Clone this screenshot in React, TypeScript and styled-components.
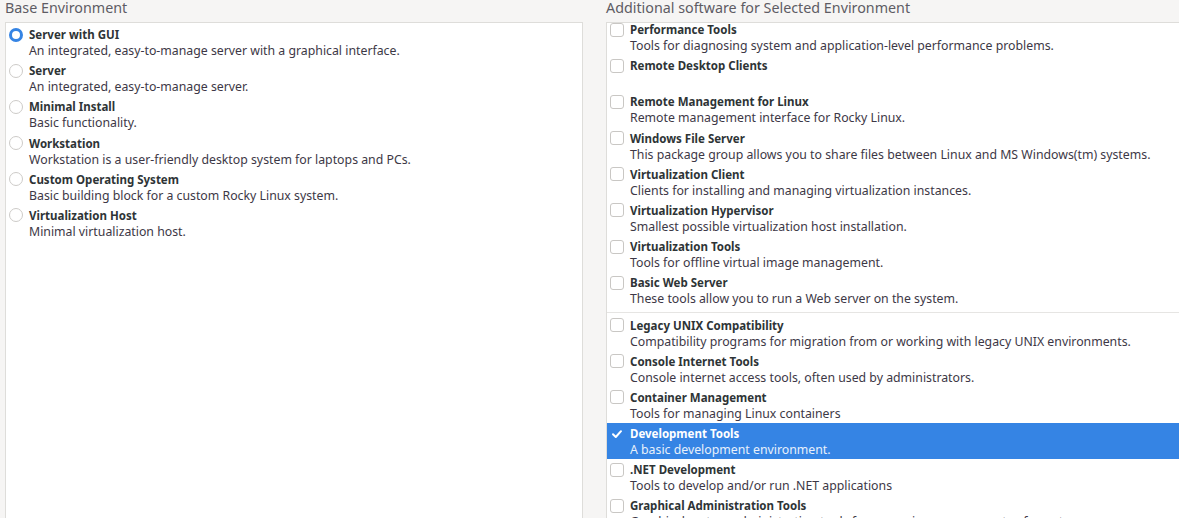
import React from "react";
import styled, { createGlobalStyle } from "styled-components";

const Global = createGlobalStyle`
  html, body { margin: 0; padding: 0; }
  body {
    background: #f6f5f4;
    font-family: "Noto Sans", "DejaVu Sans", sans-serif;
    width: 1179px;
    height: 518px;
    overflow: hidden;
  }
`;

const Page = styled.div`
  display: grid;
  grid-template-columns: 578px 574px;
  column-gap: 23px;
  padding-left: 5px;
  height: 518px;
`;

const Column = styled.div`
  display: flex;
  flex-direction: column;
  min-height: 0;
`;

const Heading = styled.div`
  height: 22px;
  line-height: 16px;
  font-size: 14.3px;
  color: #5e5c64;
  white-space: nowrap;
`;

const Panel = styled.div`
  flex: 1;
  background: #ffffff;
  border: 1px solid #deddda;
  border-bottom: none;
  overflow: hidden;
  min-height: 0;
`;

const List = styled.div<{ $offset: number }>`
  display: flex;
  flex-direction: column;
  margin-top: ${(p) => p.$offset}px;
`;

const Row = styled.div<{ $selected?: boolean }>`
  display: grid;
  grid-template-columns: 20px 1fr;
  height: 36.2px;
  box-sizing: border-box;
  padding: 2px 0 0 3px;
  background: ${(p) => (p.$selected ? "#3584e4" : "transparent")};
  color: ${(p) => (p.$selected ? "#ffffff" : "#2e3436")};
`;

const Control = styled.div`
  height: 17px;
  display: flex;
  align-items: center;
`;

const Texts = styled.div`
  display: flex;
  flex-direction: column;
  white-space: nowrap;
`;

const Title = styled.div`
  font-size: 11.5px;
  font-weight: 700;
  line-height: 17px;
`;

const Desc = styled.div<{ $selected?: boolean }>`
  font-size: 12.3px;
  line-height: 16px;
  color: ${(p) => (p.$selected ? "#e8f0fb" : "#3d3846")};
`;

const Separator = styled.div`
  height: 1px;
  background: #e6e5e3;
  margin: 3px 0 2px;
`;

const RadioCircle = styled.span<{ $on?: boolean }>`
  width: 14px;
  height: 14px;
  box-sizing: border-box;
  border-radius: 50%;
  background: #ffffff;
  border: ${(p) => (p.$on ? "3.5px solid #3584e4" : "1px solid #cdcbc8")};
`;

const CheckBox = styled.span<{ $on?: boolean }>`
  width: 14px;
  height: 14px;
  box-sizing: border-box;
  border-radius: 3px;
  display: flex;
  align-items: center;
  justify-content: center;
  background: ${(p) => (p.$on ? "transparent" : "#ffffff")};
  border: 1px solid ${(p) => (p.$on ? "transparent" : "#c9c7c4")};
`;

type Item = { title: string; desc: string; on?: boolean; sep?: boolean };

const envs: Item[] = [
  { title: "Server with GUI", desc: "An integrated, easy-to-manage server with a graphical interface.", on: true },
  { title: "Server", desc: "An integrated, easy-to-manage server." },
  { title: "Minimal Install", desc: "Basic functionality." },
  { title: "Workstation", desc: "Workstation is a user-friendly desktop system for laptops and PCs." },
  { title: "Custom Operating System", desc: "Basic building block for a custom Rocky Linux system." },
  { title: "Virtualization Host", desc: "Minimal virtualization host." },
];

const addons: Item[] = [
  { title: "Performance Tools", desc: "Tools for diagnosing system and application-level performance problems." },
  { title: "Remote Desktop Clients", desc: "" },
  { title: "Remote Management for Linux", desc: "Remote management interface for Rocky Linux." },
  { title: "Windows File Server", desc: "This package group allows you to share files between Linux and MS Windows(tm) systems." },
  { title: "Virtualization Client", desc: "Clients for installing and managing virtualization instances." },
  { title: "Virtualization Hypervisor", desc: "Smallest possible virtualization host installation." },
  { title: "Virtualization Tools", desc: "Tools for offline virtual image management." },
  { title: "Basic Web Server", desc: "These tools allow you to run a Web server on the system.", sep: true },
  { title: "Legacy UNIX Compatibility", desc: "Compatibility programs for migration from or working with legacy UNIX environments." },
  { title: "Console Internet Tools", desc: "Console internet access tools, often used by administrators." },
  { title: "Container Management", desc: "Tools for managing Linux containers" },
  { title: "Development Tools", desc: "A basic development environment.", on: true },
  { title: ".NET Development", desc: "Tools to develop and/or run .NET applications" },
  { title: "Graphical Administration Tools", desc: "Graphical system administration tools for managing many aspects of a system." },
];

const Check = () => (
  <svg width="12" height="12" viewBox="0 0 12 12">
    <path d="M2 6.2 L4.8 9 L10 3.2" fill="none" stroke="#ffffff" strokeWidth="2" strokeLinecap="round" strokeLinejoin="round" />
  </svg>
);

export default function App() {
  return (
    <>
      <Global />
      <Page>
        <Column>
          <Heading>Base Environment</Heading>
          <Panel>
            <List $offset={1}>
              {envs.map((e) => (
                <Row key={e.title}>
                  <Control>
                    <RadioCircle $on={e.on} />
                  </Control>
                  <Texts>
                    <Title>{e.title}</Title>
                    <Desc>{e.desc}</Desc>
                  </Texts>
                </Row>
              ))}
            </List>
          </Panel>
        </Column>
        <Column>
          <Heading>Additional software for Selected Environment</Heading>
          <Panel>
            <List $offset={-4}>
              {addons.map((a) => (
                <React.Fragment key={a.title}>
                  <Row $selected={a.on}>
                    <Control>
                      <CheckBox $on={a.on}>{a.on && <Check />}</CheckBox>
                    </Control>
                    <Texts>
                      <Title>{a.title}</Title>
                      <Desc $selected={a.on}>{a.desc}</Desc>
                    </Texts>
                  </Row>
                  {a.sep && <Separator />}
                </React.Fragment>
              ))}
            </List>
          </Panel>
        </Column>
      </Page>
    </>
  );
}
